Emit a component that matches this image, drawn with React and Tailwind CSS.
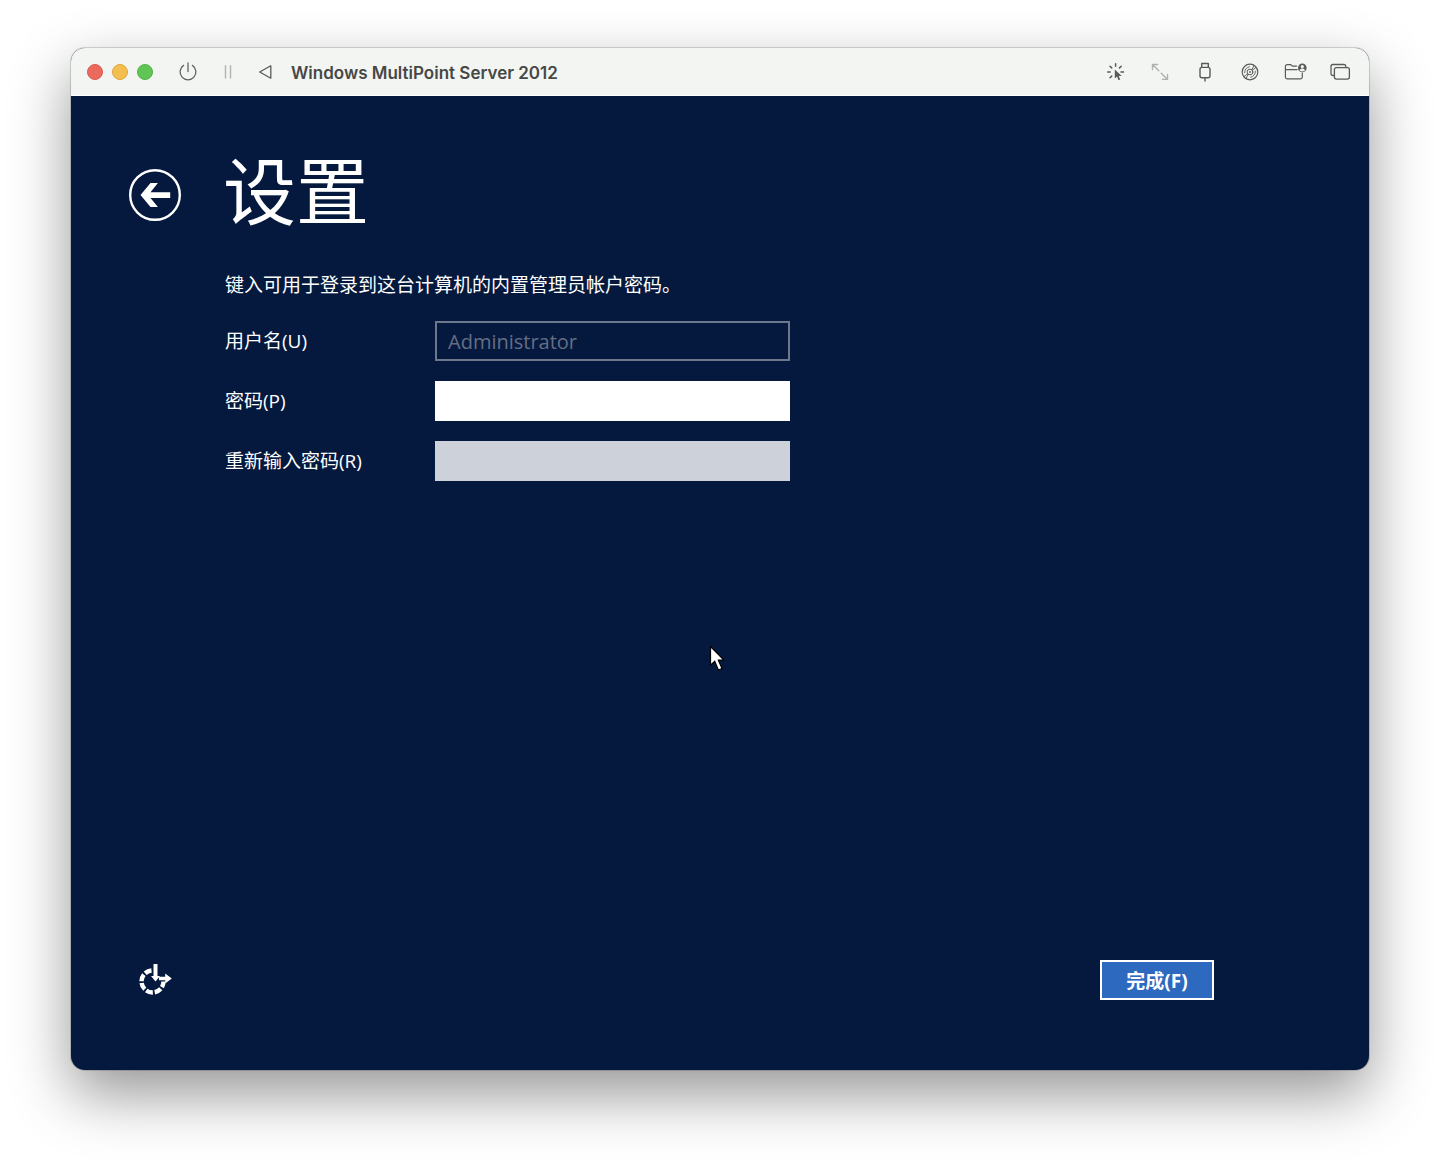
import React, { useState } from 'react'

const PowerIcon = () => (
  <svg width="22" height="22" viewBox="0 0 22 22" fill="none" stroke="#626361" strokeWidth="1.3" strokeLinecap="round">
    <path d="M11 2v8.6" />
    <path d="M6.6 4.4a7.9 7.9 0 1 0 8.8 0" />
  </svg>
)

const PauseIcon = () => (
  <svg width="14" height="22" viewBox="0 0 14 22" fill="none" stroke="#b5b7b4" strokeWidth="1.5" strokeLinecap="round">
    <path d="M4.5 4.8v12.2M9.5 4.8v12.2" />
  </svg>
)

const BackTriangleIcon = () => (
  <svg width="16" height="22" viewBox="0 0 16 22" fill="none" stroke="#5a5b59" strokeWidth="1.3" strokeLinejoin="round">
    <path d="M2.7 11 13.8 4.8v12.4z" />
  </svg>
)

const ClickIcon = () => (
  <svg width="22" height="22" viewBox="0 0 22 22" fill="none" stroke="#5a5b59" strokeWidth="1.5" strokeLinecap="round">
    <path d="M11.6 2.8v2.4M6 5.2l1.7 1.7M3.7 11h2.5M6 16.8l1.7-1.7M17.2 5.2l-1.7 1.7M17 11h2.5" />
    <path d="M10.8 8.4v9l2.2-1.9 1.5 3.7 1.7-.8-1.5-3.5h3z" fill="#5a5b59" stroke="none" />
  </svg>
)

const ResizeIcon = () => (
  <svg width="22" height="22" viewBox="0 0 22 22" fill="none" stroke="#b0b2af" strokeWidth="1.4" strokeLinecap="round" strokeLinejoin="round">
    <path d="M3.5 8.6V3.5h5.1M3.8 3.8l6 6M18.5 13.4v5h-5M18.2 18.2l-6-6" />
  </svg>
)

const UsbIcon = () => (
  <svg width="22" height="22" viewBox="0 0 22 22" fill="none" stroke="#5a5b59" strokeWidth="1.4" strokeLinecap="round" strokeLinejoin="round">
    <path d="M7.7 6.4V2.5h6.6v3.9" />
    <rect x="6" y="6.4" width="10" height="10.4" rx="2" />
    <path d="M11 17v3" />
  </svg>
)

const DiscIcon = () => (
  <svg width="22" height="22" viewBox="0 0 22 22" fill="none" stroke="#5a5b59" strokeWidth="1.2" strokeLinecap="round">
    <circle cx="11" cy="11" r="7.8" />
    <circle cx="11" cy="11" r="2.9" strokeWidth="1" />
    <circle cx="11" cy="11" r="0.9" fill="#5a5b59" stroke="none" />
    <path d="M5.6 11.8c0-3.2 1.8-5.4 4.8-6.1M16.4 10.2c0 3.2-1.8 5.4-4.8 6.1M12.8 8.7l2.2-4.2M13.3 9.2l3.6-2.6M9.2 13.3 7 17.5M8.700 12.8l-3.600 2.600" strokeWidth="0.9" />
  </svg>
)

const SharedFolderIcon = () => (
  <svg width="22" height="22" viewBox="1 0 22 22" fill="none" stroke="#5a5b59" strokeWidth="1.2" strokeLinecap="round" strokeLinejoin="round" overflow="visible">
    <path d="M13.6 5.1H9.4L7.8 3.7H4.2c-1.1 0-1.8.6-1.8 1.8v10.6c0 1.1.7 1.8 1.8 1.8h13.3c1.1 0 1.8-.7 1.8-1.8v-4.1M2.4 8.6h11.8" />
    <circle cx="19.3" cy="6.9" r="4.3" fill="#5a5b59" stroke="none" />
    <circle cx="19.3" cy="5.6" r="1.6" fill="#f3f5f2" stroke="none" />
    <path d="M16.6 9.4c.5-1.3 1.5-1.8 2.7-1.8s2.2.5 2.7 1.8c-1.5 1.5-3.9 1.5-5.4 0z" fill="#f3f5f2" stroke="none" />
  </svg>
)

const WindowsIcon = () => (
  <svg width="22" height="22" viewBox="0 0 22 22" fill="none" stroke="#5a5b59" strokeWidth="1.3" strokeLinejoin="round">
    <path d="M5.4 14.5H4c-1.3 0-2-.7-2-2V5.5c0-1.3.7-2 2-2h10.8c1.3 0 2 .7 2 2v1.2" />
    <rect x="5.4" y="6.7" width="15" height="11.4" rx="2" />
  </svg>
)

const BackArrowIcon = () => (
  <svg width="52" height="52" viewBox="0 0 52 52" fill="none">
    <circle cx="26" cy="26" r="24.8" stroke="#fff" strokeWidth="2.4" />
    <path d="M11.5 26 21.5 14h7.4l-7.4 9.2h19.7v5.7H21.5l7.400 9.200h-7.400z" fill="#fff" />
  </svg>
)

const EaseOfAccessIcon = () => (
  <svg width="34" height="34" viewBox="0 0 34 34" fill="none">
    <path d="M12.5 7.5a11 11 0 1 0 12 11" stroke="#fff" strokeWidth="4.4" strokeDasharray="7 1.9" />
    <path d="M14.5 1h4v12h2.5l-4.5 5.5-4.5-5.5h2.5z" fill="#fff" />
    <path d="M20 13.7h6.2v-3.2l6.6 5-6.6 5v-3.2h-6.2z" fill="#fff" />
  </svg>
)

const Pointer = () => (
  <svg width="18" height="28" viewBox="0 0 18 28">
    <path d="M1.5 1.5v18.7l4.2-4 3.7 8.8 3.6-1.5-3.7-8.5h5.6z" fill="#fff" stroke="#000" strokeWidth="1.2" />
  </svg>
)

const tools = [
  { label: 'Capture pointer', Icon: ClickIcon },
  { label: 'Resize', Icon: ResizeIcon },
  { label: 'USB devices', Icon: UsbIcon },
  { label: 'Drive image', Icon: DiscIcon },
  { label: 'Shared folder', Icon: SharedFolderIcon },
  { label: 'Windows', Icon: WindowsIcon },
]

const TitleBar = () => (
  <header className="flex h-12 items-center justify-between border-b border-white bg-[#f3f5f2] pl-4 pr-[18px]">
    <div className="flex items-center gap-[18px]">
      <div className="flex items-center gap-[22px]">
        <div className="mr-0.5 flex gap-[9px]">
          <button aria-label="Close" className="h-4 w-4 rounded-full border border-[#d8584e] bg-[#ec695e]" />
          <button aria-label="Minimize" className="h-4 w-4 rounded-full border border-[#dda640] bg-[#f4bf4f]" />
          <button aria-label="Zoom" className="h-4 w-4 rounded-full border border-[#52b044] bg-[#61c554]" />
        </div>
        <button aria-label="Power"><PowerIcon /></button>
        <button aria-label="Pause"><PauseIcon /></button>
        <button aria-label="Restart"><BackTriangleIcon /></button>
      </div>
      <span className="pt-0.5 font-['Inter',sans-serif] text-[17px] leading-6 font-semibold text-[#474846]">Windows MultiPoint Server 2012</span>
    </div>
    <div className="flex items-center gap-[23px]">
      {tools.map(({ label, Icon }) => (
        <button key={label} aria-label={label}><Icon /></button>
      ))}
    </div>
  </header>
)

const App = () => {
  const [password, setPassword] = useState('')
  const [confirm, setConfirm] = useState('')

  return (
    <div className="flex min-h-screen flex-col bg-white px-[71px] pb-[94px] pt-12">
      <div className="relative flex flex-1 flex-col overflow-hidden rounded-[14px] bg-[#05193e] shadow-[0_0_0_1px_rgba(0,0,0,0.15),0_24px_60px_rgba(0,0,0,0.42)]">
        <TitleBar />
        <form
          className="flex flex-1 flex-col pb-[70px] pl-[58px] pr-[155px] pt-[47px] font-['Open_Sans','Noto_Sans_CJK_SC',sans-serif] text-[19px] leading-6 text-white"
          onSubmit={(e) => e.preventDefault()}
        >
          <div className="flex items-end gap-[42px]">
            <button type="button" aria-label="返回" className="mb-[18px]"><BackArrowIcon /></button>
            <h1 className="text-[73px] leading-[96px]">设置</h1>
          </div>
          <div className="ml-24 mt-[34px]">
            <p>键入可用于登录到这台计算机的内置管理员帐户密码。</p>
            <div className="mt-6 grid grid-cols-[210px_355px] items-center gap-y-5">
              <label htmlFor="username">用户名(U)</label>
              <input id="username" className="h-10 border-2 border-[#6d778c] px-[11px] text-xl text-[#646e85]" value="Administrator" disabled />
              <label htmlFor="password">密码(P)</label>
              <input
                id="password"
                type="password"
                className="h-10 bg-white px-[11px] text-black outline-none"
                value={password}
                onChange={(e) => setPassword(e.target.value)}
              />
              <label htmlFor="confirm">重新输入密码(R)</label>
              <input
                id="confirm"
                type="password"
                className="h-10 bg-[#cdd1d9] px-[11px] text-black outline-none"
                value={confirm}
                onChange={(e) => setConfirm(e.target.value)}
              />
            </div>
          </div>
          <div className="mt-auto flex items-center justify-between pl-[10px]">
            <button type="button" aria-label="轻松访问"><EaseOfAccessIcon /></button>
            <button type="submit" className="h-10 w-[114px] border-2 border-white bg-[#2d6abf] pt-0.5 font-bold leading-6">完成(F)</button>
          </div>
        </form>
        <div className="pointer-events-none absolute left-[638px] top-[597px]"><Pointer /></div>
      </div>
    </div>
  )
}

export default App
